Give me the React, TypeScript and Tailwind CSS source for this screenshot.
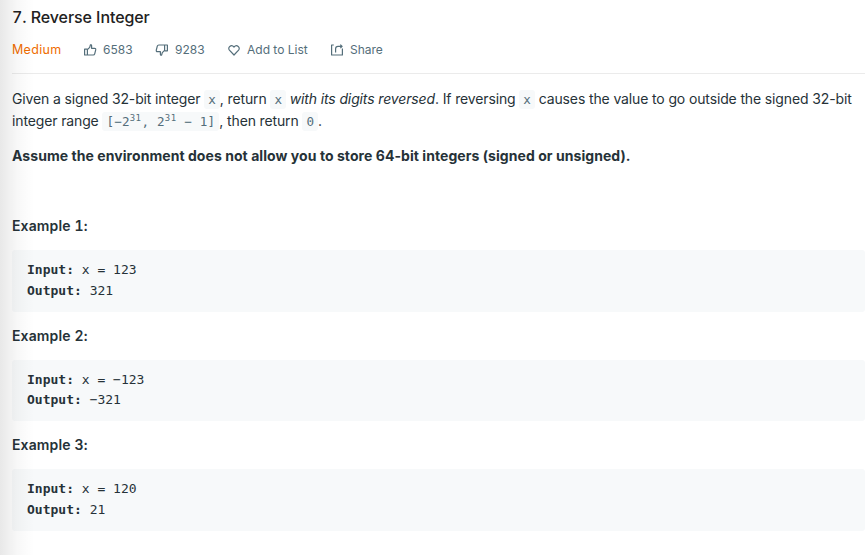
import type { ReactNode } from 'react';

const examples = [
  { title: 'Example 1:', input: 'x = 123', output: '321' },
  { title: 'Example 2:', input: 'x = −123', output: '−321' },
  { title: 'Example 3:', input: 'x = 120', output: '21' },
];

function Code({ children }: { children: ReactNode }) {
  return (
    <code className="rounded-[3px] bg-[#f7f9fa] px-[4px] py-[2px] font-['DejaVu_Sans_Mono',monospace] text-[12.6px] leading-none tracking-normal text-[#546e7a]">
      {children}
    </code>
  );
}

function Sup({ children }: { children: ReactNode }) {
  return <sup className="relative top-[-5px] align-baseline text-[9px] leading-none tracking-[0.5px]">{children}</sup>;
}

function Icon({ children }: { children: ReactNode }) {
  return (
    <svg width="14" height="14" viewBox="0 0 14 14" fill="none" stroke="currentColor" strokeWidth="1.2" strokeLinejoin="round" className="shrink-0">
      {children}
    </svg>
  );
}

const thumb = 'M4.4 6.2 H1.6 V12 H10.2 Q11.4 12 11.7 10.9 L12.7 6.9 Q12.9 5.3 11.6 5.3 H8.6 V2.6 Q8.4 1.5 7.4 1.9 L6.7 4.3 L4.4 6.6 V12';

export default function App() {
  return (
    <div className="relative h-[555px] w-[865px] overflow-hidden bg-white pl-3 font-['Inter',sans-serif] text-[14px] text-[#263238]">
      <h1 className="pt-[5px] text-[16px] leading-[24px] font-medium tracking-[-0.08px] text-[#212121] tabular-nums">7. Reverse Integer</h1>
      <div className="mt-[11px] flex h-5 items-center text-[12px] leading-5 text-[#546e7a]">
        <span className="w-[71px] text-[12.5px] tracking-[0.3px] text-[#ef6c00]">Medium</span>
        <span className="flex w-[72px] items-center gap-[6px]">
          <Icon><path d={thumb} /></Icon>6583
        </span>
        <span className="flex w-[72px] items-center gap-[6px]">
          <Icon><path d={thumb} transform="rotate(180 7 7)" /></Icon>9283
        </span>
        <span className="flex w-[103px] items-center gap-[6px]">
          <Icon><path d="M7 12 L2.4 7.2 C0.2 4.6 4.1 0.8 7 4 C9.9 0.8 13.8 4.6 11.6 7.2 Z" /></Icon>Add to List
        </span>
        <span className="flex items-center gap-[6px]">
          <Icon><path d="M3.8 2 H1.6 V12 H12.4 V5.6 M5.6 9.6 V5.8 Q5.6 3.4 8 3.4 H12 M10.3 1.6 L12.1 3.4 L10.3 5.2" /></Icon>Share
        </span>
      </div>
      <div className="mt-[13px] h-px bg-[#ebebeb]" />
      <p className="mt-[14px] leading-[22px] tracking-[-0.133px] whitespace-nowrap">
        Given a signed 32-bit integer <Code>x</Code>, return <Code>x</Code> <em>with its digits reversed</em>. If reversing <Code>x</Code> causes the value to go outside the signed 32-bit
        <br />
        integer range <Code><span className="tracking-[0.16px]">[−2<Sup>31</Sup>, 2<Sup>31</Sup> − 1]</span></Code>, then return <Code>0</Code>.
      </p>
      <p className="mt-[13px] leading-[22px] font-bold tracking-[0.06px]">Assume the environment does not allow you to store 64-bit integers (signed or unsigned).</p>
      <div className="mt-[48px]">
        {examples.map((example) => (
          <section key={example.title} className="h-[109.6px]">
            <h2 className="leading-[22px] font-semibold tracking-[0.12px] tabular-nums">{example.title}</h2>
            <pre className="mt-[13px] rounded-[3px] bg-[#f7f9fa] px-[15px] py-[10px] font-['DejaVu_Sans_Mono',monospace] text-[13px] leading-[20.8px]">
              <strong>Input:</strong> {example.input}{'\n'}
              <strong>Output:</strong> {example.output}
            </pre>
          </section>
        ))}
      </div>
      <div className="pointer-events-none absolute inset-y-0 left-0 w-[34px] bg-gradient-to-r from-black/9 via-black/3 to-transparent" />
    </div>
  );
}
